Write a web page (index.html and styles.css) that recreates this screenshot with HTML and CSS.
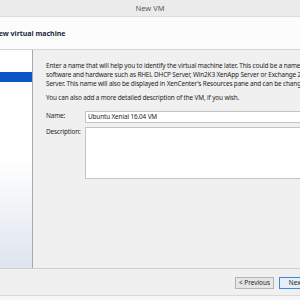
FILE: index.html
```html
<!DOCTYPE html>
<html>
<head>
<meta charset="utf-8">
<link rel="stylesheet" href="styles.css">
</head>
<body>
<div class="window">
  <div class="titlebar">New VM</div>
  <div class="header">New virtual machine</div>
  <div class="main">
    <div class="nav">
      <div class="nav-item selected"></div>
    </div>
    <div class="content">
      <p class="para">Enter a name that will help you to identify the virtual machine later. This could be a name that identifies the<br>software and hardware such as RHEL DHCP Server, Win2K3 XenApp Server or Exchange 2007 Client Access<br>Server. This name will also be displayed in XenCenter's Resources pane and can be changed later.</p>
      <p class="para gap">You can also add a more detailed description of the VM, if you wish.</p>
      <div class="row">
        <span class="label">Name:</span>
        <div class="field">Ubuntu Xenial 16.04 VM</div>
      </div>
      <div class="row desc">
        <span class="label">Description:</span>
        <div class="area"></div>
      </div>
    </div>
  </div>
  <div class="footer">
    <div class="btn">&lt; Previous</div>
    <div class="btn primary">Next &gt;</div>
  </div>
  <div class="bottom"></div>
</div>
</body>
</html>
```

FILE: styles.css
```css
html, body {
  margin: 0;
  padding: 0;
  width: 300px;
  height: 300px;
  overflow: hidden;
  background: #f0f0f0;
}
.window {
  margin-left: -20px;
  width: 340px;
  font-family: "Noto Sans", "Open Sans", sans-serif;
  color: #1e1e1e;
}
.titlebar {
  height: 16px;
  line-height: 16px;
  background: #ebebeb;
  border-bottom: 1px solid #dcdcdc;
  text-align: center;
  font-size: 7.5px;
  color: #5a5a5a;
}
.header {
  height: 32px;
  line-height: 34px;
  background: #fcfcfc;
  border-bottom: 1px solid #d5d5d5;
  padding-left: 13px;
  font-size: 7px;
  font-weight: bold;
  color: #1a2a40;
}
.main {
  display: flex;
  height: 218px;
  border-bottom: 1px solid #cfcfcf;
}
.nav {
  width: 53px;
  flex: none;
  border-right: 1px solid #a8a8a8;
  background: linear-gradient(to bottom, #ffffff 0%, #ffffff 50%, #dfe4ee 100%);
  padding-top: 22px;
  box-sizing: border-box;
}
.nav-item {
  height: 10px;
}
.nav-item.selected {
  background: #0b55c4;
}
.content {
  flex: 1;
  min-width: 0;
  padding: 11px 0 0 13px;
  font-size: 6.4px;
  letter-spacing: -0.13px;
  line-height: 9px;
}
.para {
  margin: 0;
  white-space: nowrap;
}
.para.gap {
  margin-top: 5px;
}
.row {
  display: flex;
  margin-top: 9px;
}
.row.desc {
  margin-top: 4px;
}
.label {
  width: 39px;
  flex: none;
  line-height: 9px;
}
.row:first-of-type .label {
  line-height: 10px;
}
.field {
  width: 250px;
  height: 10px;
  border: 1px solid #c4c4c4;
  background: #ffffff;
  padding-left: 2px;
  line-height: 10px;
}
.area {
  width: 250px;
  height: 50px;
  border: 1px solid #c4c4c4;
  background: #ffffff;
}
.footer {
  display: flex;
  height: 26px;
  padding: 8px 0 0 255px;
  box-sizing: border-box;
  gap: 5px;
}
.btn {
  width: 37px;
  height: 10px;
  line-height: 10px;
  border: 1px solid #b4b4b4;
  background: #e6e6e6;
  font-size: 6.4px;
  text-align: center;
}
.btn.primary {
  border-color: #3c8ad6;
  background: #e6eef8;
}
.bottom {
  height: 5px;
  border-top: 1px solid #d8d8d8;
  background: #f6f6f6;
}
```
